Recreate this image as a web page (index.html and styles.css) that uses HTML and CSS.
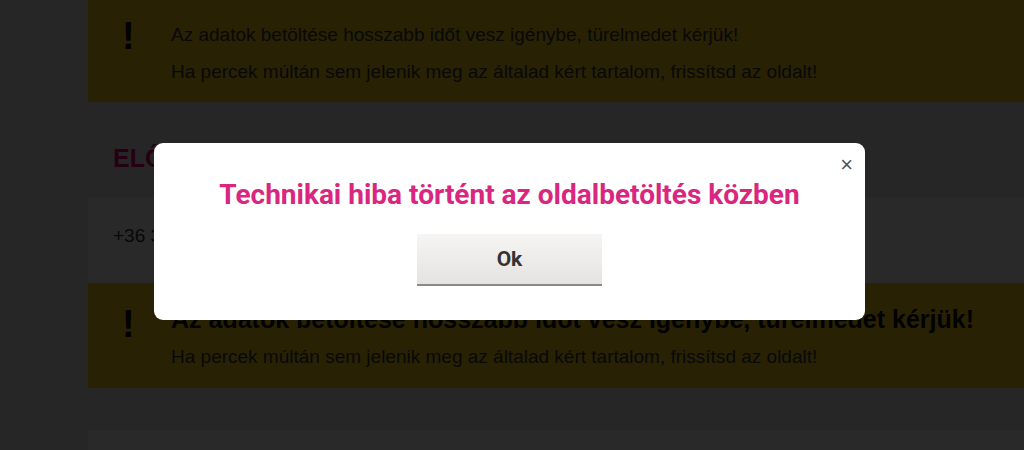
FILE: index.html
```html
<!DOCTYPE html>
<html lang="hu">
<head>
  <meta charset="UTF-8">
  <title>Hiba | Telekom</title>
  <link rel="stylesheet" href="styles.css">
</head>
<body>
  <div class="page">
    <div class="notice notice-top">
      <span class="notice-icon">!</span>
      <div class="notice-text">
        <p>Az adatok betöltése hosszabb időt vesz igénybe, türelmedet kérjük!</p>
        <p>Ha percek múltán sem jelenik meg az általad kért tartalom, frissítsd az oldalt!</p>
      </div>
    </div>

    <h2 class="section-title">ELŐFIZETÉSEK</h2>

    <div class="row">+36 30 123 4567</div>

    <div class="notice">
      <span class="notice-icon">!</span>
      <div class="notice-text">
        <p class="lead">Az adatok betöltése hosszabb időt vesz igénybe, türelmedet kérjük!</p>
        <p>Ha percek múltán sem jelenik meg az általad kért tartalom, frissítsd az oldalt!</p>
      </div>
    </div>

    <div class="row row-empty"></div>
  </div>

  <div class="overlay">
    <div class="modal">
      <button class="close" aria-label="Bezár">&times;</button>
      <h1 class="modal-title">Technikai hiba történt az oldalbetöltés közben</h1>
      <button class="ok">Ok</button>
    </div>
  </div>
</body>
</html>
```

FILE: styles.css
```css
body {
  margin: 0;
  font-family: "Liberation Sans", Arial, sans-serif;
  background-color: #ececec;
  color: #222;
}
.page {
  padding-left: 88px;
  height: 450px;
  overflow: hidden;
}
.notice {
  display: flex;
  background-color: #f7cc1c;
  height: 105px;
  box-sizing: border-box;
  padding: 21px 0 0 34px;
}
.notice-top {
  height: 102px;
  padding-top: 16px;
}
.notice-icon {
  width: 49px;
  font-size: 38px;
  font-weight: bold;
  line-height: 40px;
  color: #111;
}
.notice-text p {
  margin: 0;
  font-size: 19px;
  line-height: 37px;
  color: #3a3a3a;
}
.notice-text .lead {
  font-size: 25px;
  font-weight: bold;
  line-height: 30px;
  margin-bottom: 4px;
  color: #111;
}
.section-title {
  margin: 0;
  height: 95px;
  box-sizing: border-box;
  padding: 42px 0 0 25px;
  font-size: 25px;
  color: #e20074;
}
.row {
  background-color: #fff;
  height: 86px;
  box-sizing: border-box;
  padding: 28px 0 0 25px;
  font-size: 19px;
  color: #333;
}
.row-empty {
  margin-top: 42px;
}
.overlay {
  position: fixed;
  inset: 0;
  background: rgba(0, 0, 0, 0.84);
  display: flex;
  justify-content: center;
  align-items: flex-start;
  padding: 143px 5px 0 0;
}
.modal {
  position: relative;
  width: 711px;
  height: 177px;
  box-sizing: border-box;
  background-color: #fff;
  border-radius: 9px;
  padding-top: 35px;
  text-align: center;
}
.close {
  position: absolute;
  top: 9px;
  right: 12px;
  border: none;
  background: none;
  font-family: "Liberation Sans", Arial, sans-serif;
  font-size: 22px;
  color: #555;
  cursor: pointer;
  padding: 0;
}
.modal-title {
  margin: 0;
  font-family: Roboto, "Liberation Sans", sans-serif;
  font-size: 28px;
  color: #d9267f;
}
.ok {
  margin-top: 23px;
  width: 185px;
  height: 52px;
  border: none;
  border-bottom: 2px solid #8a8a8a;
  background: linear-gradient(#f6f5f3, #e4e3e1);
  font-family: Roboto, "Liberation Sans", sans-serif;
  font-size: 21px;
  font-weight: bold;
  color: #333;
  cursor: pointer;
}
```
